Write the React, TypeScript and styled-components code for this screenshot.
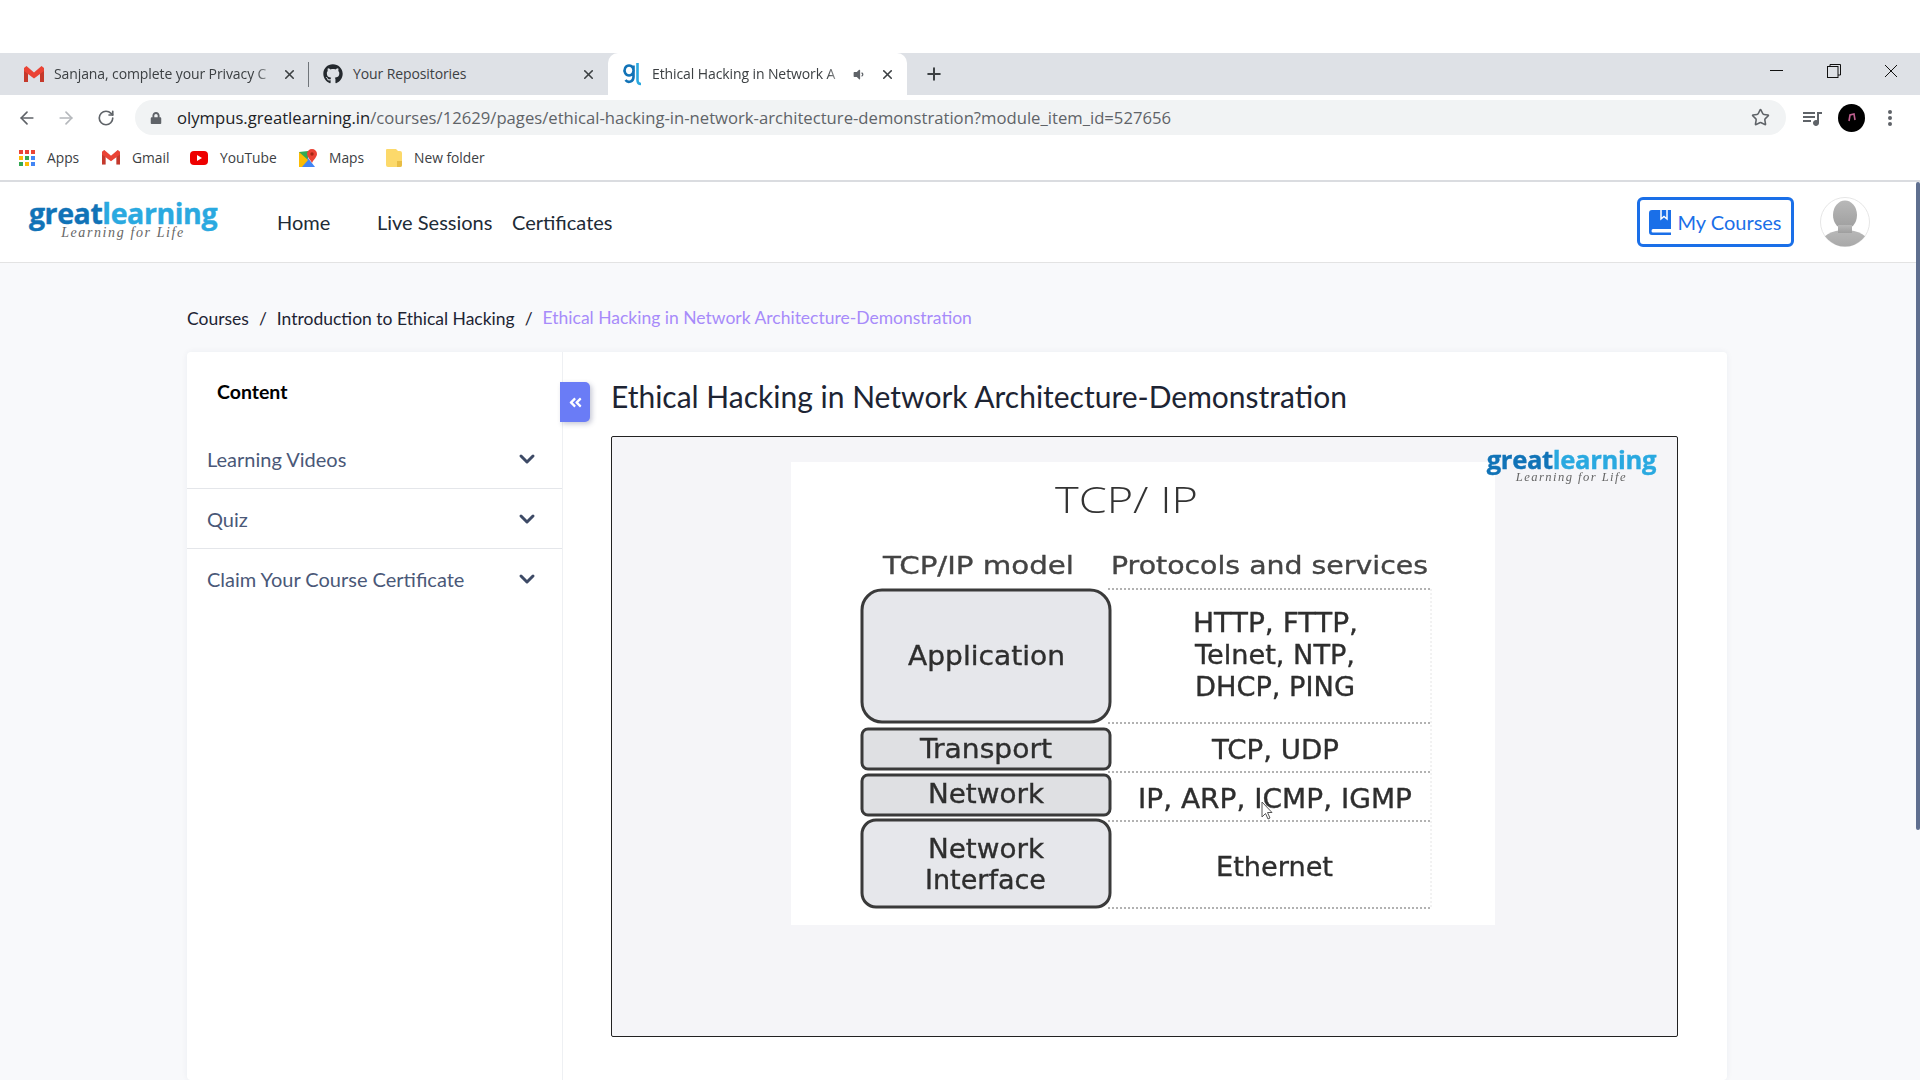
import React from 'react'
import styled, { createGlobalStyle } from 'styled-components'
import { ArrowLeft, ArrowRight, RotateCw, Star, X, Plus, ChevronDown } from 'lucide-react'
import { FaGithub, FaLock, FaVolumeDown, FaAngleDoubleLeft } from 'react-icons/fa'
import { MdQueueMusic } from 'react-icons/md'

const GlobalStyle = createGlobalStyle`
  html, body {
    margin: 0;
    height: 100%;
    overflow: hidden;
    background: #fff;
    font-family: "Lato", "Open Sans", sans-serif;
  }
  * { box-sizing: border-box; }
`

const Screen = styled.div`
  width: 1920px;
  height: 1080px;
  display: flex;
  flex-direction: column;
  overflow: hidden;
`

const TopStrip = styled.div`
  height: 53px;
  flex: none;
  background: #fff;
`

const TabStrip = styled.div`
  height: 42px;
  flex: none;
  background: #dee1e6;
  display: flex;
  align-items: stretch;
  padding-left: 10px;
  font-family: "Open Sans", sans-serif;
`

const Tab = styled.div<{ $active?: boolean }>`
  width: 299px;
  display: flex;
  align-items: center;
  padding: 0 12px 0 14px;
  gap: 10px;
  position: relative;
  background: ${p => (p.$active ? '#fff' : 'transparent')};
  border-radius: ${p => (p.$active ? '10px 10px 0 0' : '0')};
`

const TabTitle = styled.span<{ $fade?: boolean }>`
  flex: 1;
  font-size: 14px;
  letter-spacing: -0.1px;
  color: #3c4043;
  white-space: nowrap;
  margin-top: -2px;
  ${p =>
    p.$fade &&
    `-webkit-mask-image: linear-gradient(to right, #000 92%, rgba(0,0,0,.25) 100%);
     mask-image: linear-gradient(to right, #000 92%, rgba(0,0,0,.25) 100%);`}
`

const TabSeparator = styled.div`
  width: 1px;
  height: 25px;
  background: #70757a;
  align-self: center;
  margin-left: -1px;
`

const AudioIcon = styled(FaVolumeDown)`
  margin-right: 5px;
`

const NewTab = styled.div`
  width: 54px;
  display: flex;
  align-items: center;
  justify-content: center;
  color: #3c4043;
`

const WindowControls = styled.div`
  margin-left: auto;
  display: flex;
  align-items: flex-start;
  padding-top: 11px;
  padding-right: 22px;
  gap: 43px;
`

const Toolbar = styled.div`
  height: 40px;
  flex: none;
  display: flex;
  align-items: center;
  padding: 5px 0 0 17px;
`

const NavButtons = styled.div`
  width: 118px;
  display: flex;
  gap: 19px;
  align-items: center;
`

const ReloadIcon = styled(RotateCw)`
  margin-left: 2px;
`

const AddressBar = styled.div`
  width: 1651px;
  height: 35px;
  border-radius: 18px;
  background: #f1f3f4;
  display: flex;
  align-items: center;
  padding: 0 16px 0 15px;
  font-family: "Open Sans", sans-serif;
`

const Url = styled.div`
  margin-left: 15px;
  flex: 1;
  font-size: 16.66px;
  color: #5f6368;
  white-space: nowrap;

  b {
    font-weight: 400;
    color: #202124;
  }
`

const ToolbarRight = styled.div`
  display: flex;
  align-items: center;
  padding-left: 14px;
  gap: 14px;
`

const ProfileDot = styled.div`
  width: 27px;
  height: 28px;
  border-radius: 50%;
  background: #000;
  display: flex;
  align-items: center;
  justify-content: center;
`

const MenuDots = styled.svg`
  margin-left: 5px;
  fill: #5f6368;
`

const BookmarkBar = styled.div`
  height: 47px;
  flex: none;
  display: flex;
  align-items: center;
  padding: 0 0 0 19px;
  border-bottom: 2px solid #dadce0;
  font-family: "Open Sans", sans-serif;
`

const Bookmark = styled.div<{ $width: number }>`
  width: ${p => p.$width}px;
  display: flex;
  align-items: center;
  gap: 12px;
  font-size: 13.8px;
  color: #3c4043;
`

const Viewport = styled.div`
  flex: 1;
  display: flex;
  min-height: 0;
  background: #f8f9fb;
`

const Page = styled.div`
  flex: 1;
  min-width: 0;
  display: flex;
  flex-direction: column;
`

const ScrollTrack = styled.div`
  width: 4px;
  flex: none;
`

const ScrollThumb = styled.div`
  height: 648px;
  background: #5f6f8f;
  border-radius: 2px;
`

const AppHeader = styled.header`
  height: 81px;
  flex: none;
  background: #fff;
  border-bottom: 1px solid #e3e3e3;
  display: flex;
  align-items: center;
  padding: 0 46px 0 29px;
`

const LogoBox = styled.div<{ $scale?: number }>`
  width: ${p => 188 * (p.$scale ?? 1)}px;
  display: flex;
  flex-direction: column;
  align-items: center;
  font-family: "Open Sans", sans-serif;
  line-height: 1;
  margin-top: ${p => -6 * (p.$scale ?? 1)}px;
`

const LogoWord = styled.div<{ $scale?: number }>`
  font-size: ${p => 28.5 * (p.$scale ?? 1)}px;
  font-weight: 700;
  letter-spacing: ${p => -0.4 * (p.$scale ?? 1)}px;
  color: #1173b7;
  line-height: ${p => 27 * (p.$scale ?? 1)}px;
  -webkit-text-stroke: ${p => 0.4 * (p.$scale ?? 1)}px currentColor;
  white-space: nowrap;

  span {
    color: #2aa9e0;
  }
`

const LogoTag = styled.div<{ $scale?: number }>`
  font-family: "Liberation Serif", serif;
  font-style: italic;
  font-size: ${p => 14 * (p.$scale ?? 1)}px;
  letter-spacing: ${p => 1.6 * (p.$scale ?? 1)}px;
  color: #666;
  white-space: nowrap;
  line-height: ${p => 12 * (p.$scale ?? 1)}px;
`

const HeaderNav = styled.nav`
  display: flex;
  margin-left: 60px;
  font-size: 20px;
  color: #212b36;
`

const NavLink = styled.a<{ $width: number }>`
  width: ${p => p.$width}px;
`

const CoursesButton = styled.button`
  margin-left: auto;
  width: 157px;
  height: 50px;
  border: 3px solid #1a6fe8;
  border-radius: 6px;
  background: #fff;
  color: #1a6fe8;
  font: 400 20px "Lato", sans-serif;
  display: flex;
  align-items: center;
  justify-content: center;
  gap: 6px;
  padding: 0;
`

const Avatar = styled.div`
  margin-left: 26px;
  width: 50px;
  height: 50px;
  flex: none;
`

const Breadcrumb = styled.div`
  height: 89px;
  flex: none;
  display: flex;
  align-items: center;
  padding: 21px 0 0 187px;
  font-size: 17.5px;
  color: #1d2433;
`

const Crumb = styled.span<{ $current?: boolean }>`
  color: ${p => (p.$current ? '#a78bfa' : '#1d2433')};
  ${p => p.$current && 'margin-top: -2px;'}
`

const CrumbSlash = styled.span`
  margin: 0 10px;
`

const Card = styled.div`
  margin-left: 187px;
  width: 1540px;
  flex: 1;
  display: flex;
  background: #fff;
  border-radius: 4px;
  box-shadow: 0 0 6px rgba(40, 50, 80, 0.06);
`

const Sidebar = styled.aside`
  width: 376px;
  flex: none;
  position: relative;
  border-right: 1px solid #eef0f3;
`

const SidebarTitle = styled.div`
  height: 77px;
  padding: 26px 0 0 30px;
  font-size: 19.5px;
  line-height: 28px;
  font-weight: 700;
  color: #000;
`

const SidebarRow = styled.div<{ $last?: boolean }>`
  height: 60px;
  display: flex;
  align-items: center;
  justify-content: space-between;
  padding: 0 23px 0 20px;
  font-size: 20px;
  color: #4a5878;
  border-bottom: ${p => (p.$last ? 'none' : '1px solid #e4e6ea')};
`

const CollapseButton = styled.div`
  position: absolute;
  top: 30px;
  right: -28px;
  width: 30px;
  height: 40px;
  border-radius: 0 5px 5px 0;
  background: #6a7cf6;
  box-shadow: 2px 2px 5px rgba(30, 40, 90, 0.25);
  color: #fff;
  display: flex;
  align-items: center;
  justify-content: center;
`

const Main = styled.main`
  flex: 1;
  min-width: 0;
  padding: 21px 0 0 48px;
`

const LessonTitle = styled.h1`
  margin: 0 0 15px;
  height: 48px;
  font-size: 30px;
  line-height: 46px;
  font-weight: 400;
  color: #1d2433;
  white-space: nowrap;
`

const VideoFrame = styled.div`
  position: relative;
  width: 1067px;
  height: 601px;
  border: 1px solid #222;
  border-radius: 2px;
  background: #f5f5f8;
`

const VideoLogo = styled.div`
  position: absolute;
  top: 16px;
  right: 21px;
  filter: blur(0.4px);
`

const SlideDrawing = styled.svg`
  display: block;
  width: 100%;
  height: 100%;
  filter: blur(0.35px);
`

const GmailIcon = ({ size = 20 }: { size?: number }) => (
  <svg width={size} height={size * 0.8} viewBox="0 0 20 16">
    <path d="M0 2 L0 16 L4 16 L4 6 L10 11 L16 6 L16 16 L20 16 L20 2 L17.5 0 L10 6.5 L2.5 0 Z" fill="#d9d9d9" />
    <path d="M0 3 L0 16 L4 16 L4 6 Z M20 3 L20 16 L16 16 L16 6 Z" fill="#c5392c" />
    <path d="M0 2 L2.5 0 L10 6.5 L17.5 0 L20 2 L20 5 L10 12.5 L0 5 Z" fill="#ea4335" />
  </svg>
)

const GreatLearningTabIcon = () => (
  <svg width="20" height="24" viewBox="0 0 20 24">
    <path d="M7 3.5 a4.5 5 0 1 0 0.1 0 Z M11.5 3.5 V15 a4.5 5 0 0 1 -8 3" fill="none" stroke="#1173b7" strokeWidth="2.6" />
    <path d="M15.5 1 V18 q0 4 3.5 4" fill="none" stroke="#2aa9e0" strokeWidth="2.6" />
  </svg>
)

const AppsIcon = () => (
  <svg width="16" height="16" viewBox="0 0 16 16">
    {['#ea4335', '#ea4335', '#ea4335', '#fbbc04', '#34a853', '#4285f4', '#34a853', '#fbbc04', '#4285f4'].map((c, i) => (
      <rect key={i} x={(i % 3) * 6} y={Math.floor(i / 3) * 6} width="4" height="4" fill={c} />
    ))}
  </svg>
)

const YoutubeIcon = () => (
  <svg width="18" height="14" viewBox="0 0 18 14">
    <rect width="18" height="14" rx="4" fill="#ee0000" />
    <path d="M7 4 L12 7 L7 10 Z" fill="#fff" />
  </svg>
)

const MapsIcon = () => (
  <svg width="18" height="18" viewBox="0 0 18 18">
    <path d="M0 3 L9 2 L9 18 L0 18 Z" fill="#34a853" />
    <path d="M0 18 L9 9 L16 18 Z" fill="#4285f4" />
    <path d="M0 3 L9 11 L3 18 L0 18 Z" fill="#fbbc04" />
    <path d="M13 0 a5 5 0 0 1 5 5 c0 3 -3 5 -5 9 c-2 -4 -5 -6 -5 -9 a5 5 0 0 1 5 -5 Z" fill="#ea4335" />
    <circle cx="13" cy="5" r="1.7" fill="#a52714" />
  </svg>
)

const FolderIcon = () => (
  <svg width="16" height="18" viewBox="0 0 16 18">
    <path d="M1 0 H10 L12 2 H14 Q16 2 16 4 V16 Q16 18 14 18 H2 Q0 18 0 16 V1 Q0 0 1 0 Z" fill="#fcd96a" />
    <path d="M11 12 H16 V16 Q16 18 14 18 H11 Z" fill="#e8bd45" />
  </svg>
)

const RestoreIcon = () => (
  <svg width="14" height="14" viewBox="0 0 14 14" fill="none" stroke="#111" strokeWidth="1">
    <rect x="0.5" y="2.5" width="10.5" height="11" />
    <path d="M3 2.5 V0.5 H13.5 V11 H11" />
  </svg>
)

const MinimizeIcon = () => (
  <svg width="14" height="14" viewBox="0 0 14 14">
    <path d="M0 6.5 H13" stroke="#111" strokeWidth="1" />
  </svg>
)

const CloseWindowIcon = () => (
  <svg width="14" height="14" viewBox="0 0 14 14">
    <path d="M1 1 L13 13 M13 1 L1 13" stroke="#111" strokeWidth="1" />
  </svg>
)

const BookIcon = () => (
  <svg width="22" height="25" viewBox="0 0 22 25">
    <path d="M3 0 H22 V19 H4 Q2.5 19 2.5 21 Q2.5 22.5 4 22.5 H22 V25 H3 Q0 25 0 22 V3 Q0 0 3 0 Z" fill="#1a6fe8" />
    <path d="M12 0 V9 L15 6.5 L18 9 V0" fill="none" stroke="#fff" strokeWidth="1.5" />
  </svg>
)

const PersonIcon = () => (
  <svg width="50" height="50" viewBox="0 0 50 50">
    <defs>
      <linearGradient id="person" x1="0" y1="0" x2="0" y2="1">
        <stop offset="0" stopColor="#b8b8b8" />
        <stop offset="1" stopColor="#9e9e9e" />
      </linearGradient>
      <clipPath id="personClip">
        <circle cx="25" cy="25" r="24.5" />
      </clipPath>
    </defs>
    <circle cx="25" cy="25" r="24.5" fill="#fff" stroke="#e6e6e6" />
    <g clipPath="url(#personClip)" fill="url(#person)">
      <ellipse cx="25" cy="18" rx="12" ry="14.5" />
      <ellipse cx="25" cy="47" rx="24" ry="14" />
      <rect x="18" y="28" width="14" height="8" />
    </g>
  </svg>
)

const Logo = ({ scale = 1 }: { scale?: number }) => (
  <LogoBox $scale={scale}>
    <LogoWord $scale={scale}>
      great<span>learning</span>
    </LogoWord>
    <LogoTag $scale={scale}>Learning for Life</LogoTag>
  </LogoBox>
)

// diagram is written in page pixels, the frame's inner corner sits at 612,437
const OX = 612
const OY = 437

const label = (text: string, x: number, y: number, w: number, size = 26, fill = '#2e2e2e') => (
  <text
    key={text + y}
    x={x - OX}
    y={y - OY + 1}
    textLength={w}
    lengthAdjust="spacingAndGlyphs"
    fontFamily='"DejaVu Sans", sans-serif'
    fontSize={size}
    fill={fill}
    stroke={fill}
    strokeWidth="0.35"
  >
    {text}
  </text>
)

const boxes = [
  { y: 590, h: 132, r: 20, fill: '#e6e7eb' },
  { y: 729, h: 40, r: 6, fill: '#dfe0e3' },
  { y: 775, h: 40, r: 6, fill: '#dfe0e3' },
  { y: 820, h: 87, r: 14, fill: '#e6e7eb' },
]

const dottedRows = [589, 723, 772, 821, 908]

const SlideSvg = () => (
  <SlideDrawing viewBox="0 0 1065 599">
    <rect x={791 - OX} y={462 - OY} width={704} height={463} fill="#fff" />
    {boxes.map(b => (
      <rect key={b.y} x={862 - OX} y={b.y - OY} width={248} height={b.h} rx={b.r} fill={b.fill} stroke="#3a3a3a" strokeWidth="3" />
    ))}
    {dottedRows.map(y => (
      <path key={y} d={`M${1108 - OX} ${y - OY} H${1431 - OX}`} stroke="#999" strokeWidth="1.5" strokeDasharray="2 2" />
    ))}
    <path d={`M${1431 - OX} ${589 - OY} V${908 - OY}`} stroke="#e4e4e4" strokeWidth="1" strokeDasharray="2 2" />
    <text x={1055 - OX} y={513 - OY} textLength={143} lengthAdjust="spacingAndGlyphs" fontFamily='"Open Sans", sans-serif' fontWeight="300" fontSize="37" fill="#333">
      TCP/ IP
    </text>
    {label('TCP/IP model', 883, 573, 191, 24, '#444')}
    {label('Protocols and services', 1111, 573, 317, 24, '#444')}
    {label('Application', 908, 664, 157)}
    {label('Transport', 920, 757, 132)}
    {label('Network', 928, 802, 116)}
    {label('Network', 928, 857, 116)}
    {label('Interface', 925, 888, 121)}
    {label('HTTP, FTTP,', 1193, 631, 165)}
    {label('Telnet, NTP,', 1195, 663, 160)}
    {label('DHCP, PING', 1195, 695, 160)}
    {label('TCP, UDP', 1212, 758, 127)}
    {label('IP, ARP, ICMP, IGMP', 1138, 807, 274)}
    {label('Ethernet', 1216, 875, 117)}
    <path d={`M${1262 - OX} ${802 - OY} v15 l3.5 -3.5 l2.5 5.5 l2 -1 l-2.5 -5.5 h4.5 Z`} fill="#fff" stroke="#555" strokeWidth="1" />
  </SlideDrawing>
)

const App = () => (
  <Screen>
    <GlobalStyle />
    <TopStrip />
    <TabStrip>
      <Tab>
        <GmailIcon />
        <TabTitle $fade>Sanjana, complete your Privacy C</TabTitle>
        <X size={15} strokeWidth={2.5} color="#3c4043" />
      </Tab>
      <TabSeparator />
      <Tab>
        <FaGithub size={20} color="#24292e" />
        <TabTitle>Your Repositories</TabTitle>
        <X size={15} strokeWidth={2.5} color="#3c4043" />
      </Tab>
      <Tab $active>
        <GreatLearningTabIcon />
        <TabTitle $fade>Ethical Hacking in Network A</TabTitle>
        <AudioIcon size={13} color="#5f6368" />
        <X size={15} strokeWidth={2.5} color="#3c4043" />
      </Tab>
      <NewTab>
        <Plus size={20} strokeWidth={2.4} />
      </NewTab>
      <WindowControls>
        <MinimizeIcon />
        <RestoreIcon />
        <CloseWindowIcon />
      </WindowControls>
    </TabStrip>
    <Toolbar>
      <NavButtons>
        <ArrowLeft size={20} color="#5f6368" strokeWidth={2} />
        <ArrowRight size={20} color="#b5b8bc" strokeWidth={2} />
        <ReloadIcon size={18} color="#5f6368" strokeWidth={2.2} />
      </NavButtons>
      <AddressBar>
        <FaLock size={12} color="#5f6368" />
        <Url>
          <b>olympus.greatlearning.in</b>/courses/12629/pages/ethical-hacking-in-network-architecture-demonstration?module_item_id=527656
        </Url>
        <Star size={19} color="#5f6368" strokeWidth={2} />
      </AddressBar>
      <ToolbarRight>
        <MdQueueMusic size={24} color="#5f6368" />
        <ProfileDot>
          <svg width="10" height="10" viewBox="0 0 10 10">
            <path d="M2 8 L3 2 L7 1 L8 7" fill="none" stroke="#c06090" strokeWidth="1.6" />
          </svg>
        </ProfileDot>
        <MenuDots width="12" height="20" viewBox="0 0 12 20">
          <circle cx="6" cy="4" r="2" />
          <circle cx="6" cy="10" r="2" />
          <circle cx="6" cy="16" r="2" />
        </MenuDots>
      </ToolbarRight>
    </Toolbar>
    <BookmarkBar>
      <Bookmark $width={83}>
        <AppsIcon />
        Apps
      </Bookmark>
      <Bookmark $width={88}>
        <GmailIcon size={18} />
        Gmail
      </Bookmark>
      <Bookmark $width={109}>
        <YoutubeIcon />
        YouTube
      </Bookmark>
      <Bookmark $width={87}>
        <MapsIcon />
        Maps
      </Bookmark>
      <Bookmark $width={120}>
        <FolderIcon />
        New folder
      </Bookmark>
    </BookmarkBar>
    <Viewport>
      <Page>
        <AppHeader>
          <Logo />
          <HeaderNav>
            <NavLink $width={100}>Home</NavLink>
            <NavLink $width={135}>Live Sessions</NavLink>
            <NavLink $width={110}>Certificates</NavLink>
          </HeaderNav>
          <CoursesButton>
            <BookIcon />
            My Courses
          </CoursesButton>
          <Avatar>
            <PersonIcon />
          </Avatar>
        </AppHeader>
        <Breadcrumb>
          <Crumb>Courses</Crumb>
          <CrumbSlash>/</CrumbSlash>
          <Crumb>Introduction to Ethical Hacking</Crumb>
          <CrumbSlash>/</CrumbSlash>
          <Crumb $current>Ethical Hacking in Network Architecture-Demonstration</Crumb>
        </Breadcrumb>
        <Card>
          <Sidebar>
            <SidebarTitle>Content</SidebarTitle>
            <SidebarRow>
              Learning Videos
              <ChevronDown size={24} strokeWidth={3} color="#3d4a66" />
            </SidebarRow>
            <SidebarRow>
              Quiz
              <ChevronDown size={24} strokeWidth={3} color="#3d4a66" />
            </SidebarRow>
            <SidebarRow $last>
              Claim Your Course Certificate
              <ChevronDown size={24} strokeWidth={3} color="#3d4a66" />
            </SidebarRow>
            <CollapseButton>
              <FaAngleDoubleLeft size={15} />
            </CollapseButton>
          </Sidebar>
          <Main>
            <LessonTitle>Ethical Hacking in Network Architecture-Demonstration</LessonTitle>
            <VideoFrame>
              <SlideSvg />
              <VideoLogo>
                <Logo scale={0.9} />
              </VideoLogo>
            </VideoFrame>
          </Main>
        </Card>
      </Page>
      <ScrollTrack>
        <ScrollThumb />
      </ScrollTrack>
    </Viewport>
  </Screen>
)

export default App
